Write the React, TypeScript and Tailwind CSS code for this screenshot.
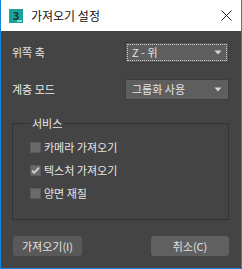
import React from "react";

const font = { fontFamily: '"Noto Sans CJK KR", "Noto Sans", sans-serif' };

function Arrow() {
  return (
    <svg width="8" height="5" viewBox="0 0 8 5" className="shrink-0">
      <path d="M0.5 0.5h7L4 4.5z" fill="#d6d6d6" />
    </svg>
  );
}

function Select({ value, focused }: { value: string; focused?: boolean }) {
  return (
    <div className="w-[104px] h-[21px] bg-[#5e5e5e] border border-[#3c3c3c] p-[1px]">
      <div
        className={
          "h-full flex items-center justify-between pl-[4px] pr-[4px] border border-dotted " +
          (focused ? "border-[#c8c8c8]" : "border-transparent")
        }
      >
        <span className="text-[11px] leading-none text-[#e4e4e4]">{value}</span>
        <Arrow />
      </div>
    </div>
  );
}

function Check({ label, checked }: { label: string; checked?: boolean }) {
  return (
    <div className="h-[23px] shrink-0 flex items-center gap-[3px]">
      <div className="w-[11px] h-[11px] bg-[#6a6a6a] border border-[#5a5a5a] flex items-center justify-center">
        {checked && (
          <svg width="9" height="9" viewBox="0 0 9 9">
            <path d="M1 4.6l2.2 2.3L8 1.6" stroke="#d8d8d8" strokeWidth="1.6" fill="none" />
          </svg>
        )}
      </div>
      <span className="text-[11px] leading-none text-[#e6e6e6]">{label}</span>
    </div>
  );
}

export default function App() {
  return (
    <div
      className="w-[242px] h-[269px] flex flex-col bg-[#444444] border-x border-b border-[#1a84d8]"
      style={font}
    >
      {/* title bar */}
      <div className="h-[31px] shrink-0 bg-white flex items-center pl-[8px] pr-[9px]">
        <div className="w-[14px] h-[14px] bg-[#1ba39a] relative flex items-start justify-center">
          <span className="text-[11px] leading-[12px] font-bold text-[#123c3c]">3</span>
          <div className="absolute right-[1px] bottom-[1px] w-[5px] h-[2px] bg-[#7fd6cf]" />
        </div>
        <span className="ml-[8px] text-[12px] text-[#111111]">가져오기 설정</span>
        <svg width="11" height="11" viewBox="0 0 11 11" className="ml-auto">
          <path d="M0.5 0.5l10 10M10.5 0.5l-10 10" stroke="#222" strokeWidth="1" />
        </svg>
      </div>

      {/* body */}
      <div className="flex-1 flex flex-col pl-[11px] pr-[12px] pt-[11px]">
        <div className="h-[21px] flex items-center justify-between">
          <span className="text-[11px] leading-none text-[#e8e8e8]">위쪽 축</span>
          <Select value="Z - 위" focused />
        </div>
        <div className="h-[21px] flex items-center justify-between mt-[16px]">
          <span className="text-[11px] leading-none text-[#e8e8e8]">계층 모드</span>
          <Select value="그룹화 사용" />
        </div>

        <fieldset className="mt-[15px] h-[105px] shrink-0 border border-[#333333] pl-[17px] pt-[5px]">
          <legend className="ml-[1px] px-[1px] text-[11px] leading-[16px] text-[#e8e8e8]">서비스</legend>
          <Check label="카메라 가져오기" />
          <Check label="텍스처 가져오기" checked />
          <Check label="양면 재질" />
        </fieldset>

        <div className="flex justify-between mt-[16px] pl-[1px]">
          <button className="w-[69px] h-[20px] rounded-[3px] bg-[#595959] text-[11px] leading-none text-[#e2e2e2]">
            가져오기(I)
          </button>
          <button className="w-[78px] h-[20px] rounded-[3px] bg-[#606060] text-[11px] leading-none text-[#e2e2e2]">
            취소(C)
          </button>
        </div>
      </div>
    </div>
  );
}
